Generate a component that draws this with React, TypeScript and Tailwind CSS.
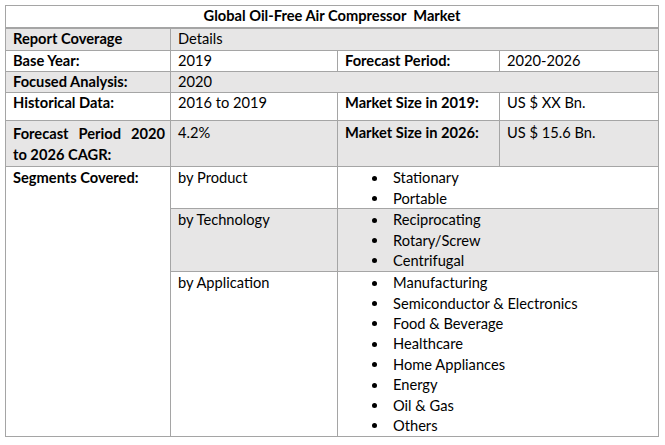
import React from "react";

const G = "bg-[#e7e6e6]";
const B = "border-[#a5a5a5]";

function Bullets({ items }: { items: string[] }) {
  return (
    <div className="flex flex-col pt-[1px]">
      {items.map((t) => (
        <div key={t} className="flex items-center h-[20.4px]">
          <div className="w-[32px] shrink-0 flex justify-end">
            <div className="w-[5px] h-[5px] rounded-full bg-black" />
          </div>
          <div className="pl-[16px]">{t}</div>
        </div>
      ))}
    </div>
  );
}

export default function App() {
  const cell = `border-r border-b ${B} px-[7px] leading-[20px]`;
  return (
    <div className="w-[665px] h-[445px] bg-white text-black text-[14.67px] font-['Lato',sans-serif] pt-[5px] pl-[5px]">
      <div
        className={`w-[654px] border-l border-t ${B} grid grid-cols-[165px_167px_162px_159px] grid-rows-[23px_22px_21px_21px_28px_46px_42px_63px_165px]`}
      >
        <div className={`col-span-4 border-r border-b-2 ${B} flex items-center justify-center font-bold whitespace-pre leading-[20px] pb-[1px]`}>
          Global Oil-Free Air Compressor  Market
        </div>

        <div className={`${cell} ${G} font-bold`}>Report Coverage</div>
        <div className={`${cell} ${G} col-span-3`}>Details</div>

        <div className={`${cell} font-bold`}>Base Year:</div>
        <div className={cell}>2019</div>
        <div className={`${cell} font-bold`}>Forecast Period:</div>
        <div className={cell}>2020-2026</div>

        <div className={`${cell} ${G} font-bold`}>Focused Analysis:</div>
        <div className={`${cell} ${G} col-span-3`}>2020</div>

        <div className={`${cell} font-bold`}>Historical Data:</div>
        <div className={cell}>2016 to 2019</div>
        <div className={`${cell} font-bold`}>Market Size in 2019:</div>
        <div className={cell}>US $ XX Bn.</div>

        <div className={`${cell} ${G} font-bold pr-[5px] pt-[2px] leading-[21px]`}>
          <div className="flex justify-between">
            <span>Forecast</span>
            <span>Period</span>
            <span>2020</span>
          </div>
          <div>to 2026 CAGR:</div>
        </div>
        <div className={`${cell} ${G} pt-[2px]`}>4.2%</div>
        <div className={`${cell} ${G} font-bold pt-[2px]`}>Market Size in 2026:</div>
        <div className={`${cell} ${G} pt-[2px]`}>US $ 15.6 Bn.</div>

        <div className={`${cell} font-bold row-span-3 pt-[1px]`}>Segments Covered:</div>
        <div className={`${cell} pt-[1px]`}>by Product</div>
        <div className={`${cell} col-span-2 px-0`}>
          <Bullets items={["Stationary", "Portable"]} />
        </div>
        <div className={`${cell} ${G} pt-[1px]`}>by Technology</div>
        <div className={`${cell} ${G} col-span-2 px-0`}>
          <Bullets items={["Reciprocating", "Rotary/Screw", "Centrifugal"]} />
        </div>
        <div className={`${cell} pt-[1px]`}>by Application</div>
        <div className={`${cell} col-span-2 px-0`}>
          <Bullets
            items={[
              "Manufacturing",
              "Semiconductor & Electronics",
              "Food & Beverage",
              "Healthcare",
              "Home Appliances",
              "Energy",
              "Oil & Gas",
              "Others",
            ]}
          />
        </div>
      </div>
    </div>
  );
}
